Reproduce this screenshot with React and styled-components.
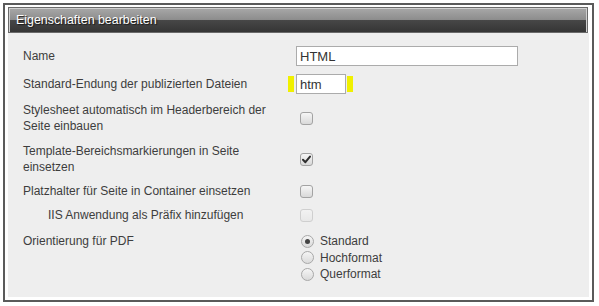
import React from "react";
import styled, { createGlobalStyle, css } from "styled-components";

const GlobalStyle = createGlobalStyle`
    body {
        margin: 0;
        background: #fff;
        font-family: "Liberation Sans", Arial, sans-serif;
    }
`;

const Wrapper = styled.div`
    margin: 3px 0 0 3px;
    width: 591px;
    height: 299px;
    box-sizing: border-box;
    border: 2px solid #5a5a5a;
    background: #fff;
    padding: 2px 3px 3px 3px;
    display: flex;
    flex-direction: column;
`;

const Header = styled.div`
    height: 26px;
    box-sizing: border-box;
    border: 1px solid #6a6a6a;
    box-shadow: inset 1px 1px 0 #d0d0d0, inset -1px 0 0 #d0d0d0;
    background: linear-gradient(
        to bottom,
        #a8a8a8 0%,
        #8c8c8c 50%,
        #474747 51%,
        #353535 100%
    );
    color: #fff;
    font-size: 12.4px;
    line-height: 24px;
    padding-left: 7px;
    text-shadow: 1px 1px 1px #1a1a1a;
    margin-right: 1px;
`;

const Panel = styled.div`
    flex: 1;
    background: #eeeeee;
    padding: 9px 0 0 15px;
    font-size: 12px;
    color: #3d3d3d;
`;

const Row = styled.div`
    display: grid;
    grid-template-columns: 265px 1fr;
    column-gap: 8px;
    align-items: ${({ $top }) => ($top ? "start" : "center")};
    padding: ${({ $pad }) => $pad || "4px 0"};
`;

const Label = styled.div`
    line-height: 16px;
    padding-left: ${({ $indent }) => ($indent ? "25px" : "0")};
`;

const Control = styled.div`
    display: flex;
    align-items: center;
`;

const TextInput = styled.input`
    box-sizing: border-box;
    height: 20px;
    width: ${({ $w }) => $w}px;
    border: 1px solid #ababab;
    background: #fff;
    font-family: "Liberation Sans", Arial, sans-serif;
    font-size: 13px;
    color: #333;
    padding: 0 3px;
    margin: 0;
    outline: none;
`;

const Marker = styled.span`
    display: inline-block;
    width: 6px;
    height: 16px;
    background: #f0f000;
    ${({ $side }) =>
        $side === "left"
            ? css`
                  margin-left: -8px;
                  margin-right: 2px;
              `
            : css`
                  margin-left: 1px;
              `}
`;

const Box = styled.span`
    display: inline-flex;
    align-items: center;
    justify-content: center;
    width: 13px;
    height: 13px;
    box-sizing: border-box;
    margin-left: 4px;
    border-radius: 3px;
    border: 1px solid ${({ $disabled }) => ($disabled ? "#cfcfcf" : "#a3a3a3")};
    background: ${({ $disabled }) =>
        $disabled
            ? "linear-gradient(#f2f2f2, #e8e8e8)"
            : "linear-gradient(#f6f6f6, #d9d9d9)"};
`;

const RadioList = styled.div`
    display: flex;
    flex-direction: column;
`;

const RadioItem = styled.label`
    display: flex;
    align-items: center;
    height: 16.5px;
`;

const Circle = styled.span`
    display: inline-flex;
    align-items: center;
    justify-content: center;
    width: 13px;
    height: 13px;
    box-sizing: border-box;
    margin: 0 6px 0 5px;
    border-radius: 50%;
    border: 1px solid #a8a8a8;
    background: linear-gradient(#f5f5f5, #dadada);
`;

const Dot = styled.span`
    width: 5px;
    height: 5px;
    border-radius: 50%;
    background: #444;
`;

const Checkbox = ({ checked, disabled }) => (
    <Box $disabled={disabled}>
        {checked && (
            <svg width="9" height="9" viewBox="0 0 9 9">
                <path
                    d="M1 4.8 L3.4 7.2 L8 1.6"
                    fill="none"
                    stroke="#2e2e2e"
                    strokeWidth="2"
                    strokeLinecap="round"
                    strokeLinejoin="round"
                />
            </svg>
        )}
    </Box>
);

const Radio = ({ checked, label }) => (
    <RadioItem>
        <Circle>{checked && <Dot />}</Circle>
        {label}
    </RadioItem>
);

const App = () => {
    return (
        <>
            <GlobalStyle />
            <Wrapper>
                <Header>Eigenschaften bearbeiten</Header>
                <Panel>
                    <Row>
                        <Label>Name</Label>
                        <Control>
                            <TextInput $w={222} defaultValue="HTML" />
                        </Control>
                    </Row>
                    <Row>
                        <Label>Standard-Endung der publizierten Dateien</Label>
                        <Control>
                            <Marker $side="left" />
                            <TextInput $w={50} defaultValue="htm" />
                            <Marker $side="right" />
                        </Control>
                    </Row>
                    <Row>
                        <Label>Stylesheet automatisch im Headerbereich der Seite einbauen</Label>
                        <Control>
                            <Checkbox />
                        </Control>
                    </Row>
                    <Row $pad="5px 0 4px">
                        <Label>Template-Bereichsmarkierungen in Seite einsetzen</Label>
                        <Control>
                            <Checkbox checked />
                        </Control>
                    </Row>
                    <Row>
                        <Label>Platzhalter für Seite in Container einsetzen</Label>
                        <Control>
                            <Checkbox />
                        </Control>
                    </Row>
                    <Row>
                        <Label $indent>IIS Anwendung als Präfix hinzufügen</Label>
                        <Control>
                            <Checkbox disabled />
                        </Control>
                    </Row>
                    <Row $top $pad="6px 0 0">
                        <Label>Orientierung für PDF</Label>
                        <RadioList>
                            <Radio checked label="Standard" />
                            <Radio label="Hochformat" />
                            <Radio label="Querformat" />
                        </RadioList>
                    </Row>
                </Panel>
            </Wrapper>
        </>
    );
};

export default App;
